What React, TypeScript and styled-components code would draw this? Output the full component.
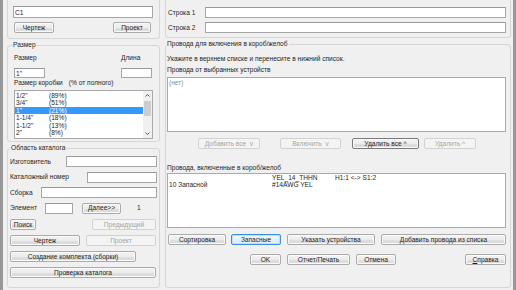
import React from 'react';
import styled, { createGlobalStyle } from 'styled-components';

const GlobalStyle = createGlobalStyle`
  html, body {
    margin: 0;
    padding: 0;
    background: #f0f0f0;
  }
  * {
    box-sizing: border-box;
  }
`;

const Window = styled.div`
  width: 516px;
  height: 290px;
  display: flex;
  overflow: hidden;
  background: #f0f0f0;
  font-family: "Liberation Sans", Arial, sans-serif;
  font-size: 6.6px;
  line-height: 8px;
  color: #1e1e1e;
`;

const Frame = styled.div`
  width: 3px;
  flex: none;
  background: #989898;
`;

const Pane = styled.div<{ $w: number; $pad: string }>`
  width: ${p => p.$w}px;
  flex: none;
  padding: ${p => p.$pad};
  display: flex;
  flex-direction: column;
`;

// верхняя группа, срезанная краем окна
const CutGroup = styled.div<{ $pad: string }>`
  border: 1px solid #d6d6d6;
  border-top: none;
  border-radius: 0 0 3px 3px;
  padding: ${p => p.$pad};
  display: flex;
  flex-direction: column;
  gap: 4px;
`;

const Group = styled.fieldset<{ $pad: string; $grow?: boolean }>`
  margin: 2px 0 0 0;
  padding: ${p => p.$pad};
  border: 1px solid #d6d6d6;
  border-radius: 3px;
  min-width: 0;
  display: flex;
  flex-direction: column;
  flex: ${p => (p.$grow ? '1 1 auto' : 'none')};
`;

const Legend = styled.legend<{ $shift: number }>`
  padding: 0 1px;
  margin-left: ${p => p.$shift}px;
  height: 8px;
  line-height: 8px;
  white-space: nowrap;
`;

const Row = styled.div<{ $mt?: number; $pl?: number }>`
  display: flex;
  align-items: center;
  margin-top: ${p => p.$mt ?? 0}px;
  padding-left: ${p => p.$pl ?? 0}px;
`;

const SpreadRow = styled(Row)<{ $pr?: number }>`
  justify-content: space-between;
  padding-right: ${p => p.$pr ?? 0}px;
`;

const Field = styled.div`
  display: flex;
  flex-direction: column;
  gap: 6px;
`;

const Label = styled.span<{ $w?: number; $mt?: number; $ml?: number; $muted?: boolean }>`
  display: block;
  flex: none;
  width: ${p => (p.$w ? `${p.$w}px` : 'auto')};
  margin-top: ${p => p.$mt ?? 0}px;
  margin-left: ${p => p.$ml ?? 0}px;
  height: 8px;
  line-height: 8px;
  white-space: nowrap;
  color: ${p => (p.$muted ? '#8e8e8e' : '#1e1e1e')};
`;

const TextBox = styled.input<{ $w?: number; $h?: number }>`
  width: ${p => (p.$w ? `${p.$w}px` : '100%')};
  flex: ${p => (p.$w ? 'none' : '0 1 auto')};
  min-width: 0;
  height: ${p => p.$h ?? 11}px;
  margin: 0;
  padding: 0 1px;
  border: 1px solid #a6a6a6;
  border-top-color: #999999;
  background: #ffffff;
  font: inherit;
  color: #1e1e1e;
  outline: none;
`;

const Button = styled.button<{ $w: number; $ml?: number; $focused?: boolean; $primary?: boolean }>`
  width: ${p => p.$w}px;
  height: 11px;
  flex: none;
  margin: 0 0 0 ${p => p.$ml ?? 0}px;
  padding: 0;
  display: flex;
  align-items: center;
  justify-content: center;
  white-space: nowrap;
  font: inherit;
  color: #1e1e1e;
  border-radius: 2px;
  border: 1px solid ${p => (p.$focused ? '#3c8fdc' : p.$primary ? '#7a7a7a' : '#ababab')};
  background: ${p =>
    p.$focused
      ? 'linear-gradient(#eef6fc, #dbecf8)'
      : 'linear-gradient(#f4f4f4 0%, #ececec 50%, #e0e0e0 51%, #d8d8d8 100%)'};
  box-shadow: ${p => (p.$focused ? 'inset 0 0 0 1px #bfe0f6' : 'inset 0 0 0 1px #fafafa')};

  &:disabled {
    color: #a5a5a5;
    border-color: #d2d2d2;
    background: #f4f4f4;
    box-shadow: none;
  }
`;

const PushRight = styled(Button)`
  margin-left: auto;
`;

const ListBox = styled.div<{ $h: number; $mt?: number }>`
  height: ${p => p.$h}px;
  flex: none;
  margin-top: ${p => p.$mt ?? 0}px;
  display: flex;
  overflow: hidden;
  background: #ffffff;
  border: 1px solid #a9a9a9;
`;

const ListItems = styled.div`
  flex: 1;
  display: flex;
  flex-direction: column;
  padding-top: 0.5px;
`;

const SizeItem = styled.div<{ $selected?: boolean }>`
  display: grid;
  grid-template-columns: 33px 1fr;
  height: 7.6px;
  line-height: 7.6px;
  padding-left: 1px;
  white-space: nowrap;
  background: ${p => (p.$selected ? '#3399ff' : 'transparent')};
  color: ${p => (p.$selected ? '#ffffff' : '#1e1e1e')};
`;

const ScrollBar = styled.div`
  width: 9px;
  flex: none;
  display: flex;
  flex-direction: column;
  align-items: center;
  background: #f0f0f0;
`;

const ScrollArrow = styled.div`
  height: 9px;
  width: 9px;
  display: flex;
  align-items: center;
  justify-content: center;
`;

const ScrollThumb = styled.div`
  width: 7px;
  height: 15px;
  margin-top: 1px;
  background: #cdcdcd;
  border-radius: 1px;
`;

const ScrollSpace = styled.div`
  flex: 1;
`;

const Placeholder = styled.div`
  padding: 1px 0 0 1px;
  color: #8e8e8e;
`;

const WireGrid = styled.div`
  flex: 1;
  display: grid;
  grid-template-columns: 103px 63px 1fr;
  grid-auto-rows: 7.5px;
  align-items: center;
  padding: 0 0 0 1px;
  white-space: nowrap;
`;

const Chevron = ({ up }: { up?: boolean }) => (
  <svg width="5" height="3" viewBox="0 0 5 3">
    <polyline
      points={up ? '0.5,2.5 2.5,0.5 4.5,2.5' : '0.5,0.5 2.5,2.5 4.5,0.5'}
      fill="none"
      stroke="#5a5a5a"
      strokeWidth="1"
    />
  </svg>
);

const sizes = [
  ['1/2"', '(89%)'],
  ['3/4"', '(51%)'],
  ['1"', '(21%)'],
  ['1-1/4"', '(18%)'],
  ['1-1/2"', '(13%)'],
  ['2"', '(8%)'],
];

const App: React.FC = () => {
  return (
    <Window>
      <GlobalStyle />
      <Frame />

      {/* левая часть */}
      <Pane $w={160} $pad="0 3px 2px 4px">
        <CutGroup $pad="6px 6px 5px 5px">
          <TextBox $h={12} defaultValue="C1" readOnly />
          <SpreadRow $pl={1} $pr={2}>
            <Button $w={40}>Чертеж</Button>
            <Button $w={38}>Проект</Button>
          </SpreadRow>
        </CutGroup>

        <Group $pad="5px 6px 2px 6px">
          <Legend $shift={-2}>Размер</Legend>
          <SpreadRow $pr={1}>
            <Field>
              <Label>Размер</Label>
              <TextBox $w={31} $h={10} defaultValue={'1"'} readOnly />
            </Field>
            <Field>
              <Label>Длина</Label>
              <TextBox $w={31} $h={10} defaultValue="" readOnly />
            </Field>
          </SpreadRow>
          <Row $mt={1}>
            <Label>Размер коробки</Label>
            <Label $ml={6}>(% от полного)</Label>
          </Row>
          <ListBox $h={49} $mt={3}>
            <ListItems>
              {sizes.map(([size, pct]) => (
                <SizeItem key={size} $selected={size === '1"'}>
                  <span>{size}</span>
                  <span>{pct}</span>
                </SizeItem>
              ))}
            </ListItems>
            <ScrollBar>
              <ScrollArrow>
                <Chevron up />
              </ScrollArrow>
              <ScrollThumb />
              <ScrollSpace />
              <ScrollArrow>
                <Chevron />
              </ScrollArrow>
            </ScrollBar>
          </ListBox>
        </Group>

        <Group $pad="4px 2px 2px 2px" $grow>
          <Legend $shift={0}>Область каталога</Legend>
          <SpreadRow>
            <Label>Изготовитель</Label>
            <TextBox $w={91} readOnly />
          </SpreadRow>
          <SpreadRow $mt={4.5}>
            <Label>Каталожный номер</Label>
            <TextBox $w={70} readOnly />
          </SpreadRow>
          <SpreadRow $mt={4.5}>
            <Label>Сборка</Label>
            <TextBox $w={116} readOnly />
          </SpreadRow>
          <Row $mt={4.5}>
            <Label $w={35}>Элемент</Label>
            <TextBox $w={28} readOnly />
            <Button $w={39} $ml={9}>Далее&gt;&gt;</Button>
            <Label $ml={16}>1</Label>
          </Row>
          <SpreadRow $mt={5.5} $pr={1}>
            <Button $w={26}>Поиск</Button>
            <Button $w={64} disabled>Предыдущий</Button>
          </SpreadRow>
          <Row $mt={5}>
            <Button $w={70}>Чертеж</Button>
            <Button $w={70} $ml={6} disabled>Проект</Button>
          </Row>
          <Row $mt={5}>
            <Button $w={126}>Создание комплекта (сборки)</Button>
          </Row>
          <Row $mt={5}>
            <Button $w={146}>Проверка каталога</Button>
          </Row>
        </Group>
      </Pane>

      {/* правая часть */}
      <Pane $w={350} $pad="0 2px 2px 2px">
        <CutGroup $pad="7px 4px 4px 2px">
          <Row>
            <Label $w={37}>Строка 1</Label>
            <TextBox readOnly />
          </Row>
          <Row>
            <Label $w={37}>Строка 2</Label>
            <TextBox readOnly />
          </Row>
        </CutGroup>

        <Group $pad="7px 4px 2px 1px" $grow>
          <Legend $shift={-1}>Провода для включения в короб/желоб</Legend>
          <Label>Укажите в верхнем списке и перенесите в нижний список.</Label>
          <Label $mt={3}>Провода от выбранных устройств</Label>
          <ListBox $h={55} $mt={3}>
            <Placeholder>(нет)</Placeholder>
          </ListBox>
          <Row $mt={6} $pl={31}>
            <Button $w={62} disabled>Добавить все&nbsp;&nbsp;v</Button>
            <Button $w={61} $ml={20} disabled>Включить&nbsp;&nbsp;v</Button>
            <Button $w={67} $ml={11} $primary>Удалить все ^</Button>
            <Button $w={52} $ml={5} disabled>Удалить ^</Button>
          </Row>
          <Label $mt={15}>Провода, включенные в короб/желоб</Label>
          <ListBox $h={55} $mt={1}>
            <WireGrid>
              <span />
              <span>YEL_14_THHN</span>
              <span>H1:1 &lt;-&gt; S1:2</span>
              <span>10 Запасной</span>
              <span>#14AWG YEL</span>
              <span />
            </WireGrid>
          </ListBox>
          <Row $mt={6}>
            <Button $w={58} $ml={1}>Сортировка</Button>
            <Button $w={50} $ml={5} $focused>Запасные</Button>
            <Button $w={88} $ml={6}>Указать устройства</Button>
            <Button $w={125} $ml={6}>Добавить провода из списка</Button>
          </Row>
          <Row $mt={9}>
            <Button $w={31} $ml={83}>OK</Button>
            <Button $w={63} $ml={6}>Отчет/Печать</Button>
            <Button $w={40} $ml={6}>Отмена</Button>
            <PushRight $w={41}>
              <u>С</u>правка
            </PushRight>
          </Row>
        </Group>
      </Pane>

      <Frame />
    </Window>
  );
};

export default App;
